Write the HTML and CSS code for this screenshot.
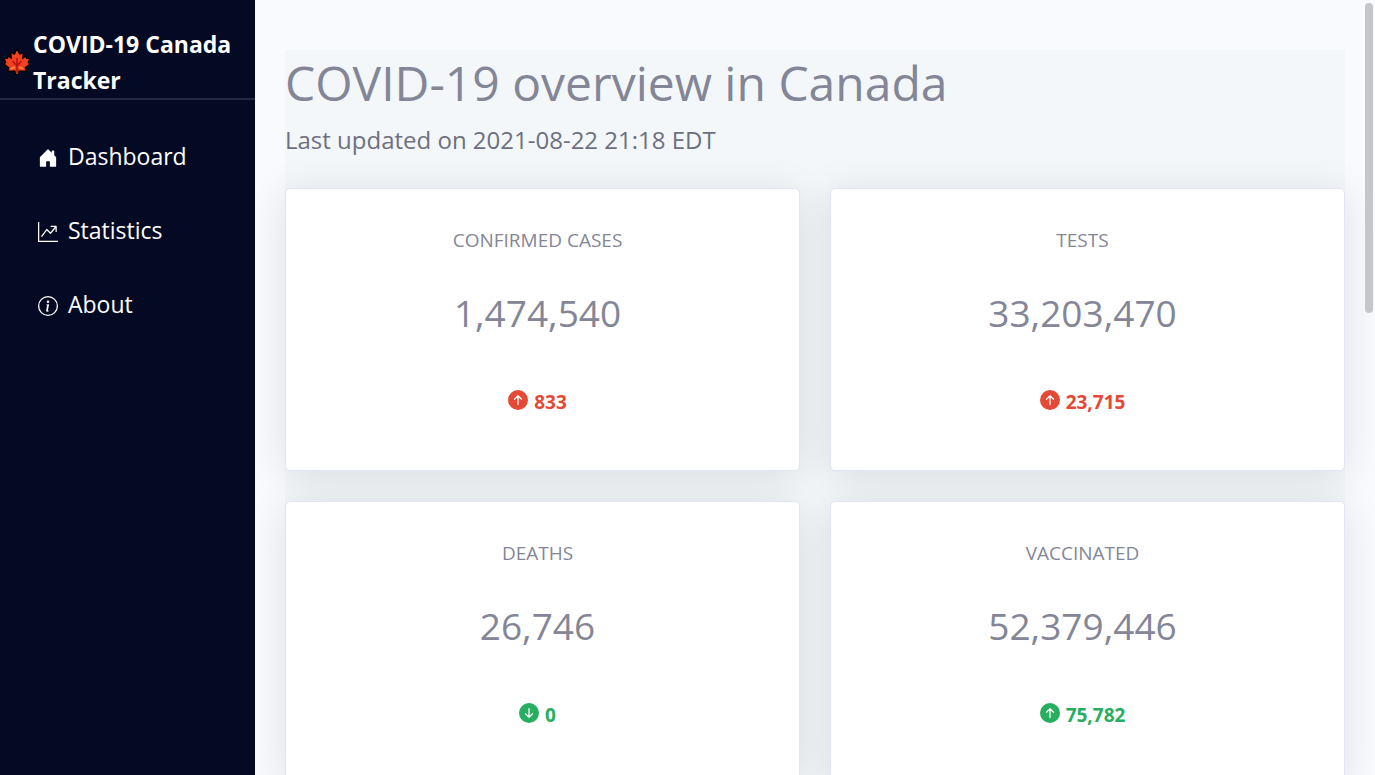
FILE: index.html
```html
<!DOCTYPE html>
<html lang="en">
<head>
<meta charset="utf-8">
<meta name="viewport" content="width=device-width, initial-scale=1">
<title>COVID-19 Canada Tracker</title>
<link rel="stylesheet" href="styles.css">
</head>
<body>
<svg class="sprite" aria-hidden="true">
  <symbol id="up" viewBox="0 0 16 16"><circle cx="8" cy="8" r="8" fill="currentColor"/><path d="M8 11.6V4.7M5.2 7.4 8 4.6l2.8 2.8" fill="none" stroke="#fff" stroke-linecap="round" stroke-linejoin="round"/></symbol>
  <symbol id="down" viewBox="0 0 16 16"><circle cx="8" cy="8" r="8" fill="currentColor"/><path d="M8 4.4v6.9M5.2 8.6 8 11.4l2.8-2.8" fill="none" stroke="#fff" stroke-linecap="round" stroke-linejoin="round"/></symbol>
</svg>
<aside class="sidebar">
  <a class="brand" href="#">
    <svg class="leaf" viewBox="0 0 26 26" aria-hidden="true">
      <path d="M13 1.500 15.500 6 18.500 4.500 18 10.500 21.500 8 22 10 25 10 23.500 13.500 25 15 20.500 18.500 21.500 21.500 14.500 21.500 14 25 12 25 11.500 21.500 4.500 21.500 5.500 18.500 1 15 2.500 13.500 1 10 4 10 4.500 8 8 10.500 7.500 4.500 10.500 6z" fill="#f4401c" stroke="#000" stroke-width="3" stroke-linejoin="round" paint-order="stroke"/>
      <path d="M13 9v15.500M13 17 8.500 12M13 17l4.500-5" fill="none" stroke="#b3141c" stroke-width="1.600"/>
      <path d="m6.500 20 4.500-2M19.500 20 15 18" stroke="#ff8a4c" stroke-width="1.500"/>
    </svg>
    <span>COVID-19 Canada Tracker</span>
  </a>
  <nav class="menu">
    <a class="menu-item" href="#dashboard">
      <svg class="menu-icon" viewBox="0 0 16 16" fill="currentColor" aria-hidden="true"><path d="M6.500 14.500v-3.500c0-.25.25-.5.5-.5h2c.25 0 .5.25.5.5v3.500c0 .25.25.5.5.5h4a.5.5 0 0 0 .5-.5v-7a.5.5 0 0 0-.15-.35L13 5.800V2.500a.5.5 0 0 0-.5-.5h-1a.5.5 0 0 0-.5.5v1.300L8.350 1.150a.5.5 0 0 0-.7 0l-6 6a.5.5 0 0 0-.15.350v7a.5.5 0 0 0 .5.5h4a.5.5 0 0 0 .5-.5z"/></svg>
      <span>Dashboard</span>
    </a>
    <a class="menu-item" href="#statistics">
      <svg class="menu-icon" viewBox="0 0 16 16" fill="currentColor" aria-hidden="true"><path fill-rule="evenodd" d="M0 0h1v15h15v1H0V0zm10 3.500a.5.5 0 0 1 .5-.5h4a.5.5 0 0 1 .5.5v4a.5.5 0 0 1-1 0V4.900l-3.613 4.417a.5.5 0 0 1-.74.037L7.060 6.767l-3.656 5.027a.5.5 0 0 1-.808-.588l4-5.500a.5.5 0 0 1 .758-.06l2.609 2.610L13.445 4H10.500a.5.5 0 0 1-.5-.5z"/></svg>
      <span>Statistics</span>
    </a>
    <a class="menu-item" href="#about">
      <svg class="menu-icon" viewBox="0 0 16 16" fill="currentColor" aria-hidden="true"><path d="M8 15A7 7 0 1 1 8 1a7 7 0 0 1 0 14zm0 1A8 8 0 1 0 8 0a8 8 0 0 0 0 16z"/><path d="m8.930 6.588-2.290.287-.082.380.45.083c.294.070.352.176.288.469l-.738 3.468c-.194.897.105 1.319.808 1.319.545 0 1.178-.252 1.465-.598l.088-.416c-.2.176-.492.246-.686.246-.275 0-.375-.193-.304-.533L8.930 6.588zM9 4.500a1 1 0 1 1-2 0 1 1 0 0 1 2 0z"/></svg>
      <span>About</span>
    </a>
  </nav>
</aside>
<main class="main">
  <section class="overview">
    <h1 class="title">COVID-19 overview in Canada</h1>
    <p class="updated">Last updated on 2021-08-22 21:18 EDT</p>
    <div class="cards">
      <article class="card">
        <h2 class="label">CONFIRMED CASES</h2>
        <p class="total">1,474,540</p>
        <p class="change bad"><svg class="arrow" aria-hidden="true"><use href="#up"/></svg><span>833</span></p>
      </article>
      <article class="card">
        <h2 class="label">TESTS</h2>
        <p class="total">33,203,470</p>
        <p class="change bad"><svg class="arrow" aria-hidden="true"><use href="#up"/></svg><span>23,715</span></p>
      </article>
      <article class="card">
        <h2 class="label">DEATHS</h2>
        <p class="total">26,746</p>
        <p class="change good"><svg class="arrow" aria-hidden="true"><use href="#down"/></svg><span>0</span></p>
      </article>
      <article class="card">
        <h2 class="label">VACCINATED</h2>
        <p class="total">52,379,446</p>
        <p class="change good"><svg class="arrow" aria-hidden="true"><use href="#up"/></svg><span>75,782</span></p>
      </article>
    </div>
  </section>
</main>
<div class="scroll-thumb" aria-hidden="true"></div>
</body>
</html>
```
FILE: styles.css
```css
* { box-sizing: border-box; }
body {
  margin: 0;
  height: 100vh;
  display: flex;
  overflow: hidden;
  background: #f9fafe;
  color: #848697;
  font-family: "Segoe UI", "Open Sans", "Noto Sans", sans-serif;
}
h1, h2, p { margin: 0; font-weight: 400; }
a { color: #fff; text-decoration: none; }
.sprite { position: absolute; width: 0; height: 0; }

.sidebar { flex: 0 0 255px; background: #050a24; }
.brand {
  display: flex;
  align-items: center;
  gap: 3px;
  padding: 26px 0 0 4px;
  border-bottom: 2px solid #24283e;
  font-size: 23px;
  line-height: 36px;
  font-weight: 700;
}
.leaf { flex: none; width: 26px; height: 26px; }
.menu {
  display: flex;
  flex-direction: column;
  gap: 38px;
  padding: 38px 0 0 38px;
}
.menu-item {
  display: flex;
  align-items: center;
  gap: 10px;
  font-size: 23px;
  line-height: 36px;
}
.menu-icon { width: 20px; height: 20px; margin-top: 4px; }

.main {
  flex: 1;
  min-width: 0;
  padding: 50px 30px 0;
  overflow: hidden;
}
.overview { background: #f3f7fa; }
.title { font-size: 48px; line-height: 66px; }
.updated {
  padding: 6px 0 30px;
  color: #6e7080;
  font-size: 24px;
  line-height: 36px;
}
.cards {
  display: grid;
  grid-template-columns: 1fr 1fr;
  gap: 30px;
}
.card {
  padding: 36px 10px 53px 0;
  border: 1px solid #e1e4f2;
  border-radius: 5px;
  background: #fff;
  box-shadow: 0 5px 40px rgba(0, 0, 0, 0.11);
  text-align: center;
}
.label { font-size: 19px; line-height: 30px; }
.total { padding: 28px 0 44px; font-size: 37px; line-height: 60px; }
.change {
  display: flex;
  align-items: center;
  justify-content: center;
  gap: 6px;
  font-size: 19px;
  line-height: 30px;
  font-weight: 700;
}
.arrow { width: 20px; height: 20px; margin-bottom: 4px; }
.bad { color: #e34935; }
.good { color: #27ae60; }

.scroll-thumb {
  position: fixed;
  top: 3px;
  right: 2px;
  width: 8px;
  height: 40vh;
  border-radius: 4px;
  background: #c6c6c8;
}
```
